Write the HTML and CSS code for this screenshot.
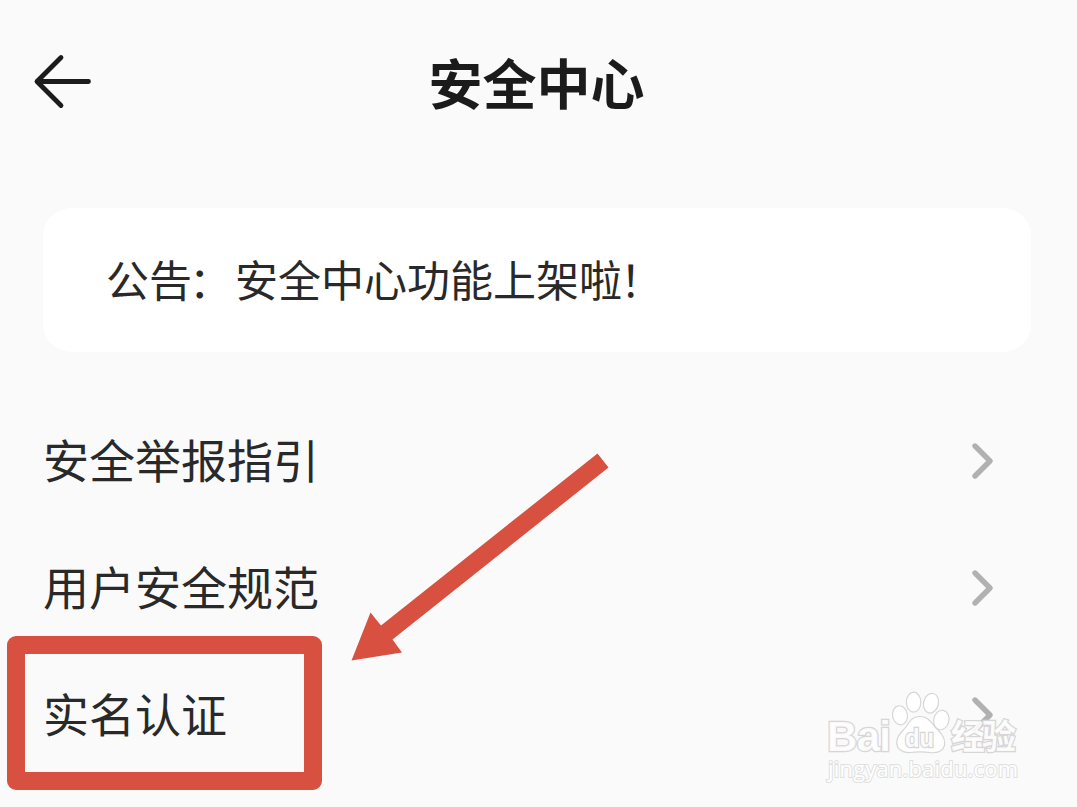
FILE: index.html
```
<!DOCTYPE html>
<html lang="zh-CN">
  <head>
    <meta charset="UTF-8" />
    <meta name="viewport" content="width=device-width, initial-scale=1.0" />
    <title>安全中心</title>
    <link rel="stylesheet" href="styles.css">
  </head>

  <body>
    <header class="header">
      <a class="back" href="#" aria-label="返回">
        <svg width="60" height="56" viewBox="0 0 60 56">
          <path d="M29 4.5 L5 28.5 L29 52.5 M5 28.5 H56.5" />
        </svg>
      </a>
      <h1>安全中心</h1>
    </header>

    <main>
      <div class="notice">
        <p>公告<span class="colon">：</span>安全中心功能上架啦<span class="mark">！</span></p>
      </div>

      <ul class="menu">
        <li class="menu-item">
          <span>安全举报指引</span>
          <svg class="chevron" width="24" height="38" viewBox="0 0 24 38">
            <path d="M4 4 L19 19 L4 34" />
          </svg>
        </li>
        <li class="menu-item">
          <span>用户安全规范</span>
          <svg class="chevron" width="24" height="38" viewBox="0 0 24 38">
            <path d="M4 4 L19 19 L4 34" />
          </svg>
        </li>
        <li class="menu-item">
          <span>实名认证</span>
          <svg class="chevron" width="24" height="38" viewBox="0 0 24 38">
            <path d="M4 4 L19 19 L4 34" />
          </svg>
        </li>
      </ul>
    </main>

    <!-- annotations -->
    <div class="highlight"></div>
    <svg class="pointer" width="260" height="210" viewBox="0 0 260 210">
      <path d="M0.5 208.5 L19.5 160.5 L30 173.5 L246.5 1.5 L257.5 15.5 L41.5 187.5 L51 200.5 Z" />
    </svg>

    <svg class="watermark" width="215" height="110" viewBox="0 0 215 110">
      <g class="watermark-logo">
        <text class="latin" x="12" y="71" textLength="64">Bai</text>
        <ellipse cx="85" cy="35.3" rx="7.4" ry="9.6" transform="rotate(-10 85 35.3)" />
        <ellipse cx="98.6" cy="22.2" rx="7.2" ry="10" />
        <ellipse cx="116" cy="23.2" rx="7.4" ry="10" transform="rotate(14 116 23.2)" />
        <ellipse cx="126.3" cy="40" rx="7.6" ry="9.8" transform="rotate(12 126.3 40)" />
        <path d="M105 36.5 C114 36.5 116 43 121 48 C126 53 130 57 129.7 64 C129 71 122 73.5 115 72.5 C108 71.5 102 71.5 95 72.5 C87 73 81.7 69 81.7 62 C82 55 87 52 91 47 C94 42 97 36.5 105 36.5 Z" />
        <text class="du" x="90" y="66.5" textLength="29" lengthAdjust="spacingAndGlyphs">du</text>
        <text class="cjk" x="136" y="69" textLength="65">经验</text>
      </g>
      <text class="watermark-url" x="13" y="97" textLength="190">jingyan.baidu.com</text>
    </svg>
  </body>
</html>
```
FILE: styles.css
```
* {
  box-sizing: border-box;
}

body {
  position: relative;
  height: 807px;
  margin: 0;
  overflow: hidden;
  background-color: #fafafa;
  color: #292929;
  font-family: "Noto Sans CJK SC", sans-serif;
}

.header {
  display: grid;
  grid-template-columns: 119px 1fr 123px;
  align-items: center;
  height: 208px;
  padding-bottom: 44px;
}

.back {
  display: flex;
  padding-left: 32px;
  padding-bottom: 3px;
}

.back path {
  fill: none;
  stroke: #1c1c1c;
  stroke-width: 4.8;
  stroke-linecap: round;
  stroke-linejoin: round;
}

h1 {
  margin: 0;
  color: #1b1b1b;
  font-size: 54px;
  font-weight: 700;
  line-height: 80px;
  text-align: center;
}

.notice {
  display: flex;
  align-items: center;
  height: 144px;
  margin: 0 46px 0 43px;
  padding: 0 63px 4px;
  border-radius: 28px;
  background-color: #fff;
  font-size: 43px;
}

.notice p {
  margin: 0;
  line-height: 64px;
}

.colon {
  margin: 0 3px 0 -3px;
  line-height: 1;
  vertical-align: -1px;
}

.mark {
  margin-left: -2px;
}

.menu {
  margin: 45px 0 0;
  padding: 0 82px 0 43px;
  list-style: none;
}

.menu-item {
  display: flex;
  align-items: center;
  justify-content: space-between;
  height: 127px;
  font-size: 46px;
}

.menu-item span {
  padding-bottom: 5px;
}

.chevron path {
  fill: none;
  stroke: #b1b1b1;
  stroke-width: 5.4;
  stroke-linecap: round;
  stroke-linejoin: round;
}

.highlight {
  position: absolute;
  left: 7px;
  top: 636px;
  width: 315px;
  height: 154px;
  border: 18px solid #d85140;
  border-radius: 9px;
}

.pointer {
  position: absolute;
  left: 351px;
  top: 452px;
  fill: #d85140;
}

.watermark {
  position: absolute;
  left: 815px;
  top: 680px;
}

.watermark-logo {
  fill: #fff;
  fill-opacity: 0.9;
  stroke: #d6d6d6;
  stroke-width: 1.2;
}

.watermark text {
  font-family: "Liberation Sans", "Noto Sans CJK SC", sans-serif;
  paint-order: stroke;
}

.watermark .latin {
  font-size: 42px;
  font-weight: 700;
  stroke-width: 2.5;
}

.watermark .du {
  font-size: 26px;
  font-weight: 700;
  stroke-width: 2.5;
}

.watermark .cjk {
  font-family: "Noto Sans CJK SC", sans-serif;
  font-size: 34px;
  font-weight: 700;
  stroke-width: 2.5;
}

.watermark .watermark-url {
  font-family: "Open Sans", sans-serif;
  font-size: 22px;
  fill: #fff;
  stroke: #dfdfdf;
  stroke-width: 2;
}
```
